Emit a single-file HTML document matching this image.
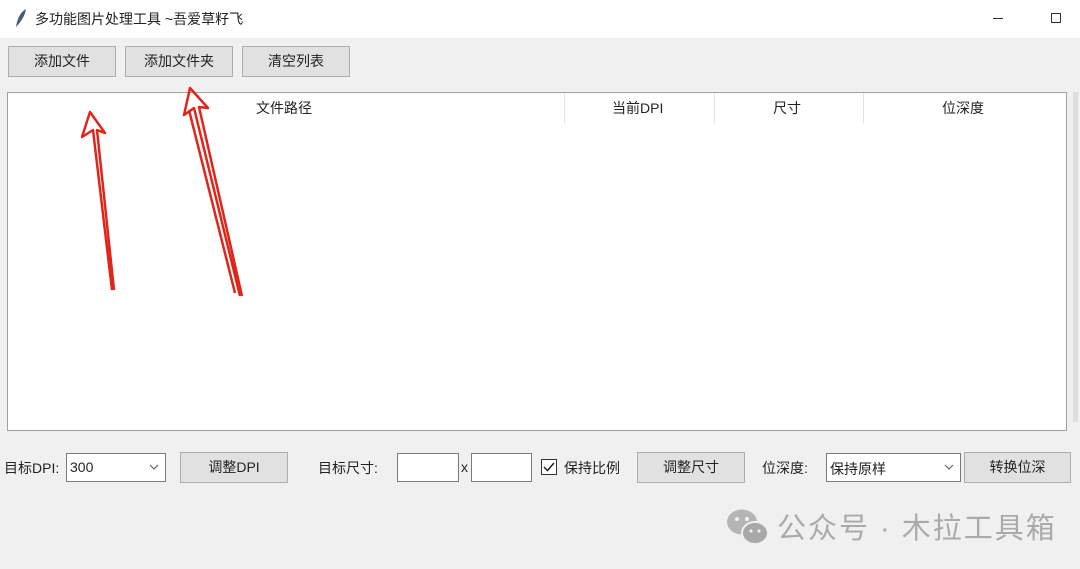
<!DOCTYPE html>
<html><head><meta charset="utf-8"><style>
*{margin:0;padding:0;box-sizing:border-box}
body{width:1080px;height:569px;background:#f0f0f0;font-family:"Liberation Sans","Noto Sans CJK SC",sans-serif;font-size:14px;color:#222;position:relative;overflow:hidden}
.a{position:absolute}
.title{left:0;top:0;width:1080px;height:38px;background:#fff}
.btn{position:absolute;background:#e1e1e1;border:1px solid #adadad;text-align:center;font-size:14px;color:#222}
.ent{position:absolute;background:#fff;border:1px solid #7a7a7a}
.lbl{position:absolute;font-size:14px;color:#222}
.hd{position:absolute;top:98px;font-size:14px;color:#222}
.sep{position:absolute;top:93px;width:1px;height:31px;background:#e5e5e5}
.chev{position:absolute;right:6px;top:10px}
</style></head><body>
<div class="a title"></div>
<svg class="a" style="left:14px;top:8px" width="14" height="20" viewBox="0 0 14 20"><path d="M2 19 C3 12 6 4 12 1 C11 7 8 13 2 19Z" fill="#4a5a7a"/></svg>
<div class="a" style="left:35px;top:9px;font-size:14px;color:#222">多功能图片处理工具 ~吾爱草籽飞</div>
<div class="a" style="left:993px;top:18px;width:10px;height:1px;background:#333"></div>
<div class="a" style="left:1051px;top:13px;width:10px;height:10px;border:1px solid #333"></div>

<div class="btn" style="left:8px;top:46px;width:108px;height:31px;line-height:29px">添加文件</div>
<div class="btn" style="left:125px;top:46px;width:108px;height:31px;line-height:29px">添加文件夹</div>
<div class="btn" style="left:242px;top:46px;width:108px;height:31px;line-height:29px">清空列表</div>

<div class="a" style="left:7px;top:92px;width:1060px;height:339px;background:#fff;border:1px solid #a0a0a0"></div>
<div class="a" style="left:1073px;top:92px;width:5px;height:330px;background:#ddd"></div>
<div class="hd" style="left:256px">文件路径</div>
<div class="hd" style="left:612px">当前DPI</div>
<div class="hd" style="left:773px">尺寸</div>
<div class="hd" style="left:942px">位深度</div>
<div class="sep" style="left:564px"></div>
<div class="sep" style="left:714px"></div>
<div class="sep" style="left:863px"></div>

<div class="lbl" style="left:4px;top:458px">目标DPI:</div>
<div class="ent" style="left:66px;top:453px;width:100px;height:29px"><span style="position:absolute;left:3px;top:5px">300</span><svg class="chev" width="10" height="7" viewBox="0 0 10 7"><path d="M1 1 L5 5 L9 1" fill="none" stroke="#666" stroke-width="1.2"/></svg></div>
<div class="btn" style="left:180px;top:452px;width:108px;height:31px;line-height:29px">调整DPI</div>
<div class="lbl" style="left:318px;top:458px">目标尺寸:</div>
<div class="ent" style="left:397px;top:453px;width:62px;height:29px"></div>
<div class="lbl" style="left:461px;top:459px">x</div>
<div class="ent" style="left:471px;top:453px;width:61px;height:29px"></div>
<div class="a" style="left:541px;top:459px;width:16px;height:16px;border:1px solid #333;background:#fff"><svg width="14" height="14" viewBox="0 0 14 14" style="position:absolute;left:0;top:0"><path d="M2 7 L5.5 10.5 L12 3" fill="none" stroke="#222" stroke-width="1.5"/></svg></div>
<div class="lbl" style="left:564px;top:458px">保持比例</div>
<div class="btn" style="left:637px;top:452px;width:108px;height:31px;line-height:29px">调整尺寸</div>
<div class="lbl" style="left:762px;top:458px">位深度:</div>
<div class="ent" style="left:826px;top:453px;width:135px;height:29px"><span style="position:absolute;left:3px;top:5px">保持原样</span><svg class="chev" width="10" height="7" viewBox="0 0 10 7"><path d="M1 1 L5 5 L9 1" fill="none" stroke="#666" stroke-width="1.2"/></svg></div>
<div class="btn" style="left:964px;top:452px;width:107px;height:31px;line-height:29px">转换位深</div>

<svg class="a" style="left:726px;top:508px" width="44" height="40" viewBox="0 0 44 40">
<ellipse cx="16" cy="14" rx="15" ry="12.5" fill="#b5b5b5"/>
<ellipse cx="29" cy="25" rx="13" ry="11" fill="#a8a8a8" stroke="#f0f0f0" stroke-width="2"/>
<circle cx="11" cy="11" r="2" fill="#f0f0f0"/><circle cx="21" cy="11" r="2" fill="#f0f0f0"/>
<circle cx="25" cy="23" r="1.6" fill="#f0f0f0"/><circle cx="33" cy="23" r="1.6" fill="#f0f0f0"/>
</svg>
<div class="a" style="left:777px;top:505px;font-size:29px;color:#aaa;letter-spacing:2px">公众号 · 木拉工具箱</div>

<svg class="a" style="left:0;top:0" width="1080" height="569">
<g fill="none" stroke="#e0261b" stroke-width="2.5" stroke-linejoin="round">
<path d="M112 290 L93 130 L82 137 L90 112 L105 133 L97 130 L114 290"/>
<path d="M240 296 L194 108 L184 115 L190 88 L208 108 L199 107 L242 296"/>
<path d="M235 293 L189 110"/>
</g></svg>
</body></html>
